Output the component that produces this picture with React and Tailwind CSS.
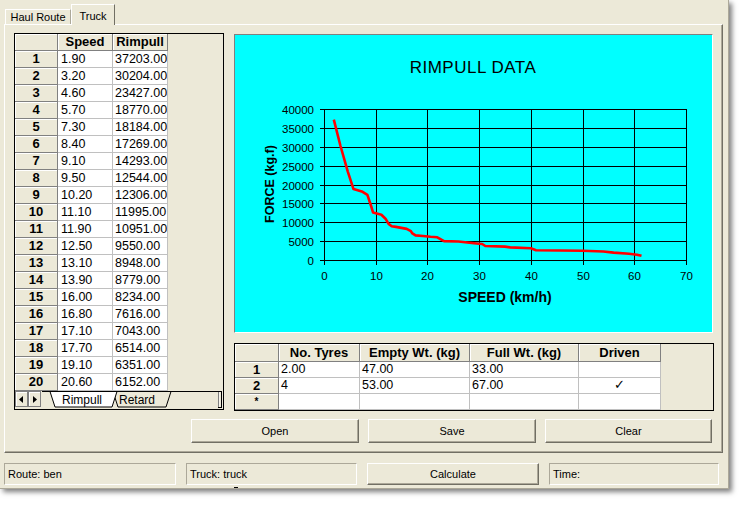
const rows = [
  ["1.90", "37203.00"],
  ["3.20", "30204.00"],
  ["4.60", "23427.00"],
  ["5.70", "18770.00"],
  ["7.30", "18184.00"],
  ["8.40", "17269.00"],
  ["9.10", "14293.00"],
  ["9.50", "12544.00"],
  ["10.20", "12306.00"],
  ["11.10", "11995.00"],
  ["11.90", "10951.00"],
  ["12.50", "9550.00"],
  ["13.10", "8948.00"],
  ["13.90", "8779.00"],
  ["16.00", "8234.00"],
  ["16.80", "7616.00"],
  ["17.10", "7043.00"],
  ["17.70", "6514.00"],
  ["19.10", "6351.00"],
  ["20.60", "6152.00"],
];

// curve beyond the visible rows read off the plot
const curve = [
  ...rows.map(([s, f]) => [parseFloat(s), parseFloat(f)]),
  [21.9, 6000], [23.2, 5000], [26, 4900], [29, 4450], [30.6, 4250], [31.2, 3700],
  [35, 3550], [36, 3350], [40, 3100], [41, 2600], [50, 2450], [54, 2250],
  [56, 1950], [59, 1650], [60.5, 1400], [61.4, 1100],
];

const tyres = [
  ["1", "2.00", "47.00", "33.00", ""],
  ["2", "4", "53.00", "67.00", "✓"],
  ["*", "", "", "", ""],
];

const head = "bg-[#ECE9D8] border-r border-b border-[#808080] shadow-[inset_1px_1px_0_#fff]";
const cell = "bg-white border-r border-b border-[#C0C0C0] overflow-hidden whitespace-nowrap";
const btn =
  "bg-[#ECE9D8] border border-t-white border-l-white border-r-[#716F64] border-b-[#716F64] shadow-[inset_-1px_-1px_0_#ACA899] text-[11px] text-black flex items-center justify-center";
const sunken =
  "border border-t-[#ACA899] border-l-[#ACA899] border-r-white border-b-white text-[11px] pl-[3px] flex items-center";

function Chart() {
  const px = (s) => 89 + s * 5.1714;
  const py = (f) => 225 - f * 0.003775;
  const pts = curve.map(([s, f]) => `${px(s).toFixed(1)},${py(f).toFixed(1)}`).join(" ");
  return (
    <svg width="478" height="297" className="block" fontFamily="'Liberation Sans', Arial, sans-serif">
      <text x="238" y="38" textAnchor="middle" fontSize="17" letterSpacing="0.5">
        RIMPULL DATA
      </text>
      {Array.from({ length: 9 }).map((_, i) => {
        const y = Math.round(225 - i * 18.875) + 0.5;
        return (
          <g key={"h" + i}>
            <line x1="85" x2="451.5" y1={y} y2={y} stroke="#000" />
            <text x="79" y={y + 4} textAnchor="end" fontSize="11.5">
              {i * 5000}
            </text>
          </g>
        );
      })}
      {Array.from({ length: 8 }).map((_, j) => {
        const x = Math.round(89 + j * 51.714) + 0.5;
        return (
          <g key={"v" + j}>
            <line x1={x} x2={x} y1="74" y2="230" stroke="#000" />
            <text x={x} y="245" textAnchor="middle" fontSize="11.5">
              {j * 10}
            </text>
          </g>
        );
      })}
      <polyline points={pts} fill="none" stroke="#ff0000" strokeWidth="2.6" strokeLinejoin="round" />
      <text x="270" y="267" textAnchor="middle" fontSize="14" fontWeight="bold">
        SPEED (km/h)
      </text>
      <text x="39" y="149" textAnchor="middle" fontSize="12.5" fontWeight="bold" transform="rotate(-90 39 149)">
        FORCE (kg.f)
      </text>
    </svg>
  );
}

function SheetTabs() {
  return (
    <svg width="208" height="17" className="block" fontFamily="'Liberation Sans', Arial, sans-serif">
      <line x1="27" x2="203" y1="0.5" y2="0.5" stroke="#000" />
      <rect x="0.5" y="0.5" width="12" height="15" fill="#ECE9D8" stroke="#808080" />
      <line x1="1" x2="12" y1="1.5" y2="1.5" stroke="#fff" />
      <line x1="1.5" x2="1.5" y1="1" y2="15" stroke="#fff" />
      <polygon points="8,5 8,12 4,8.5" fill="#000" />
      <rect x="13.5" y="0.5" width="12" height="15" fill="#ECE9D8" stroke="#808080" />
      <line x1="14" x2="25" y1="1.5" y2="1.5" stroke="#fff" />
      <line x1="14.5" x2="14.5" y1="1" y2="15" stroke="#fff" />
      <polygon points="18,5 18,12 22,8.5" fill="#000" />
      <polygon points="98,0.5 103,16 151,16 156,0.5" fill="#ECE9D8" stroke="#000" />
      <text x="104" y="13" fontSize="12">
        Retard
      </text>
      <polygon points="35,0.5 40,16 97,16 102,0.5" fill="#fff" stroke="#000" />
      <text x="47" y="13" fontSize="12">
        Rimpull
      </text>
      <rect x="203.5" y="0.5" width="3" height="16" fill="#ECE9D8" stroke="#000" />
      <line x1="204" x2="204" y1="1" y2="16" stroke="#fff" />
    </svg>
  );
}

function RimpullGrid() {
  return (
    <div className="flex h-[377px] w-[210px] flex-col overflow-hidden border border-black bg-[#ECE9D8]">
      <div className="flex h-[17px] shrink-0">
        <div className={`${head} w-[43px]`} />
        <div className={`${head} flex w-[55px] items-center justify-center text-[13px] font-bold`}>Speed</div>
        <div className={`${head} flex w-[55px] items-center justify-center text-[13px] font-bold`}>Rimpull</div>
      </div>
      {rows.map(([s, f], i) => (
        <div key={i} className="flex h-[17px] shrink-0">
          <div className={`${head} flex w-[43px] items-center justify-center text-[13px] font-bold`}>{i + 1}</div>
          <div className={`${cell} flex w-[55px] items-center pl-[3px] text-[12.5px]`}>{s}</div>
          <div className={`${cell} flex w-[55px] items-center pl-[2px] text-[12.5px]`}>{f}</div>
        </div>
      ))}
      <div className="h-[17px] shrink-0">
        <SheetTabs />
      </div>
    </div>
  );
}

function TyreGrid() {
  const widths = ["w-[44px]", "w-[81px]", "w-[110px]", "w-[109px]", "w-[82px]"];
  const titles = ["", "No. Tyres", "Empty Wt. (kg)", "Full Wt. (kg)", "Driven"];
  return (
    <div className="mt-[10px] h-[68px] w-[480px] overflow-hidden border border-black bg-[#ECE9D8]">
      <div className="flex h-[18px]">
        {titles.map((t, i) => (
          <div key={i} className={`${head} ${widths[i]} flex items-center justify-center text-[13px] font-bold`}>
            {t}
          </div>
        ))}
      </div>
      {tyres.map((r, ri) => (
        <div key={ri} className="flex h-[16px]">
          <div
            className={`${head} ${widths[0]} flex items-center justify-center font-bold ${
              r[0] === "*" ? "text-[10px]" : "text-[13px]"
            }`}
          >
            {r[0]}
          </div>
          {r.slice(1).map((v, ci) => (
            <div
              key={ci}
              className={`${cell} ${widths[ci + 1]} flex items-center text-[12.5px] ${
                ci === 3 ? "justify-center text-[11px]" : "pl-[2px]"
              }`}
            >
              {v}
            </div>
          ))}
        </div>
      ))}
    </div>
  );
}

export default function App() {
  return (
    <div className="min-h-screen bg-white font-['Liberation_Sans',Arial,sans-serif] text-black">
      <div className="h-[489px] w-[729px] border-r border-b border-[#ACA899] bg-[#ECE9D8] shadow-[3px_3px_5px_rgba(0,0,0,0.5)]">
        <div className="flex h-[24px] items-end pl-[5px]">
          <div className="flex h-[15px] w-[66px] items-center justify-center border-t border-l border-white border-r border-r-[#ACA899] text-[11px]">
            Haul Route
          </div>
          <div className="relative z-10 -mb-px flex h-[21px] w-[44px] justify-center border-t border-l border-white border-r border-r-[#716F64] bg-[#ECE9D8] pt-[3px] text-[11px]">
            Truck
          </div>
        </div>
        <div className="ml-[4px] h-[429px] w-[719px] border border-t-white border-l-white border-r-[#716F64] border-b-[#716F64] shadow-[inset_-1px_-1px_0_#ACA899]">
          <div className="flex gap-[10px] pl-[9px] pt-[8px]">
            <RimpullGrid />
            <div className="flex flex-col">
              <div className="mt-[1px] h-[299px] w-[479px] border border-t-[#808080] border-l-[#808080] border-r-white border-b-white bg-[#00FFFF]">
                <Chart />
              </div>
              <TyreGrid />
            </div>
          </div>
          <div className="mt-[8px] flex justify-end gap-[9px] pr-[10px]">
            <button className={`${btn} h-[24px] w-[168px]`}>Open</button>
            <button className={`${btn} h-[24px] w-[168px]`}>Save</button>
            <button className={`${btn} h-[24px] w-[167px]`}>Clear</button>
          </div>
        </div>
        <div className="mt-[10px] flex gap-[10px] pl-[4px]">
          <div className={`${sunken} h-[22px] w-[172px]`}>Route: ben</div>
          <div className={`${sunken} relative h-[22px] w-[171px]`}>
            Truck: truck
            <span className="absolute bottom-[-4px] left-[47px] h-px w-[4px] bg-black" />
          </div>
          <button className={`${btn} h-[22px] w-[172px]`}>Calculate</button>
          <div className={`${sunken} h-[22px] w-[170px]`}>Time:</div>
        </div>
      </div>
    </div>
  );
}
